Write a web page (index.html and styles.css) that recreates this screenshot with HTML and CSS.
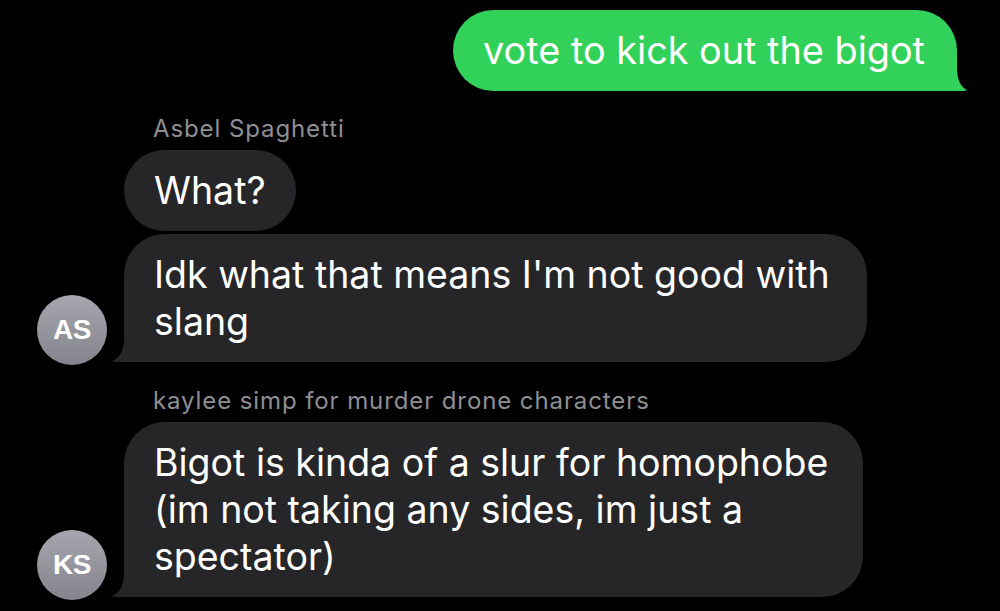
FILE: index.html
```html
<!DOCTYPE html>
<html lang="en">
<head>
<meta charset="utf-8">
<title>Messages</title>
<link rel="stylesheet" href="styles.css">
</head>
<body>
<main class="thread">
  <div class="sent-row">
    <div class="bubble sent">vote to kick out the bigot<svg class="tail-sent" width="50" height="42" viewBox="0 0 50 42" aria-hidden="true"><path d="M40 0 H0 V42 H44 C47 42 49 41.6 50 41 C44 38 40 31 40 19 Z"/></svg></div>
  </div>

  <div class="group group-first">
    <div class="avatar">AS</div>
    <div class="msgs">
      <div class="name">Asbel Spaghetti</div>
      <div class="bubble recv">What?</div>
      <div class="bubble recv wide-a">Idk what that means I'm not good with<br>slang<svg class="tail-recv" width="54" height="42" viewBox="0 0 54 42" aria-hidden="true"><path d="M12 0 H54 V42 H6 C3 42 1 41.6 0 41 C7 38 12 31 12 19 Z"/></svg></div>
    </div>
  </div>

  <div class="group group-second">
    <div class="avatar">KS</div>
    <div class="msgs">
      <div class="name">kaylee simp for murder drone characters</div>
      <div class="bubble recv wide-b">Bigot is kinda of a slur for homophobe<br>(im not taking any sides, im just a<br>spectator)<svg class="tail-recv" width="54" height="42" viewBox="0 0 54 42" aria-hidden="true"><path d="M12 0 H54 V42 H6 C3 42 1 41.6 0 41 C7 38 12 31 12 19 Z"/></svg></div>
    </div>
  </div>
</main>
</body>
</html>
```

FILE: styles.css
```css
html, body {
  margin: 0;
  padding: 0;
  background: #000;
}

body {
  font-family: "Inter", "Liberation Sans", sans-serif;
  color: #fff;
  width: 1000px;
  height: 611px;
  overflow: hidden;
}

.thread {
  display: flex;
  flex-direction: column;
}

.sent-row {
  display: flex;
  justify-content: flex-end;
  padding: 10px 43px 0 0;
}

.bubble {
  position: relative;
  z-index: 0;
  font-size: 37.5px;
  line-height: 47px;
  padding: 17px 30px;
  border-radius: 41px;
  white-space: nowrap;
  box-sizing: border-box;
}

.sent {
  background: #32d15a;
  color: #fff;
  font-size: 37.8px;
  padding-left: 30px;
  padding-right: 32px;
}

.tail-sent,
.tail-recv {
  position: absolute;
  bottom: 0;
  z-index: -1;
}

.tail-sent {
  right: -10px;
  fill: #32d15a;
}

.tail-recv {
  left: -12px;
  fill: #262629;
}

.group {
  display: flex;
  align-items: flex-end;
  gap: 17px;
  padding-left: 37px;
}

.group-first {
  margin-top: 24px;
}

.group-second {
  margin-top: 25px;
}

.avatar {
  flex: none;
  width: 70px;
  height: 70px;
  border-radius: 50%;
  background: linear-gradient(#a6a7ae, #84858c);
  color: #fff;
  font-family: "Liberation Sans", "Inter", sans-serif;
  font-weight: 700;
  font-size: 28px;
  letter-spacing: -0.5px;
  display: flex;
  align-items: center;
  justify-content: center;
  margin-bottom: -3px;
}

.msgs {
  display: flex;
  flex-direction: column;
  align-items: flex-start;
  gap: 3px;
}

.name {
  font-size: 24px;
  letter-spacing: 0.9px;
  line-height: 28px;
  color: #8e8e93;
  padding-left: 29px;
  margin-bottom: 4px;
}

.recv {
  background: #262629;
}

.wide-a {
  width: 743px;
}

.wide-b {
  width: 739px;
}
```
